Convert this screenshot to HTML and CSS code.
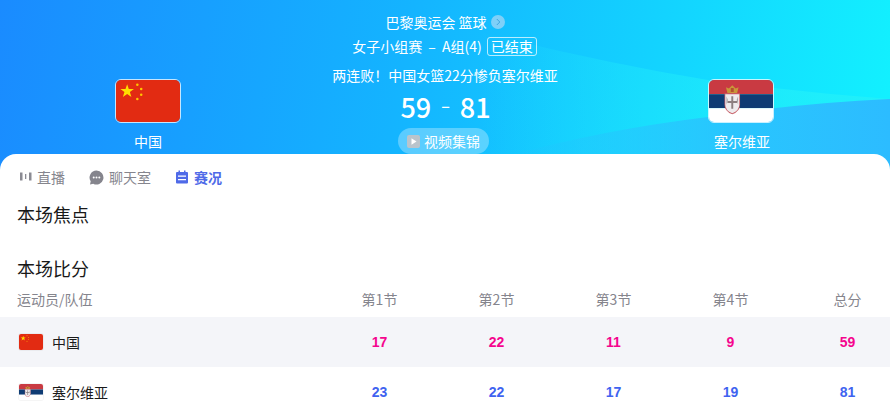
FILE: index.html
```html
<!DOCTYPE html>
<html lang="zh-CN">
<head>
    <meta charset="UTF-8">
    <title>巴黎奥运会 篮球</title>
    <link rel="stylesheet" href="styles.css">
</head>
<body>

<svg width="0" height="0" class="defs">
    <defs>
        <symbol id="flag-cn" viewBox="0 0 66 44" preserveAspectRatio="none">
            <rect width="66" height="44" fill="#e22b12"/>
            <polygon fill="#ffde00" points="11.500,4.500 13.200,9.500 18.500,9.500 14.300,12.700 15.900,17.800 11.500,14.700 7.100,17.800 8.700,12.700 4.500,9.500 9.800,9.500"/>
            <circle cx="22" cy="5" r="1.300" fill="#ffc600"/>
            <circle cx="26" cy="9.500" r="1.300" fill="#ffc600"/>
            <circle cx="26" cy="15.500" r="1.300" fill="#ffc600"/>
            <circle cx="22" cy="20" r="1.300" fill="#ffc600"/>
        </symbol>
        <symbol id="flag-rs" viewBox="0 0 66 44" preserveAspectRatio="none">
            <rect width="66" height="15" fill="#c93a42"/>
            <rect y="15" width="66" height="14.500" fill="#0f3c74"/>
            <rect y="29.500" width="66" height="14.500" fill="#fff"/>
            <!-- crown -->
            <path d="M19 13.500l-1.500-6 3 1.500 3.500-3.500 3.500 3.500 3-1.500-1.500 6z" fill="#c9963a"/>
            <path d="M22.500 8.500h3v4h-3z" fill="#b5502f"/>
            <!-- eagle and shield -->
            <path d="M16 14h16v12q0 7-8 10q-8-3-8-10z" fill="#c8626a"/>
            <path d="M16.800 14.800h14.400v11q0 6-7.200 9q-7.200-3-7.200-9z" fill="#eeecee"/>
            <path d="M23 17h2v5h4v2h-4v6h-2v-6h-4v-2h4z" fill="#8c7f80"/>
            <path d="M18 17l1.500 4-1.500 5zM30 17l-1.500 4 1.500 5z" fill="#a9a2a6"/>
        </symbol>
    </defs>
</svg>

<div class="page">
    <header class="match-head">
        <svg class="waves" viewBox="0 0 890 170" preserveAspectRatio="none">
            <defs>
                <linearGradient id="band" x1="0" x2="1" y1="0" y2="0">
                    <stop offset="0" stop-color="#22eefa" stop-opacity="0"/>
                    <stop offset=".35" stop-color="#22eefa" stop-opacity=".35"/>
                    <stop offset="1" stop-color="#22f0fa" stop-opacity=".9"/>
                </linearGradient>
                <linearGradient id="blue" x1="0" x2="1" y1="0" y2="0">
                    <stop offset="0" stop-color="#2cbcff" stop-opacity="0"/>
                    <stop offset=".6" stop-color="#2cbcff" stop-opacity=".8"/>
                    <stop offset="1" stop-color="#2cbcff"/>
                </linearGradient>
            </defs>
            <path d="M480 32 Q600 62 708 80 Q800 92 890 99 L890 170 L480 170Z" fill="url(#band)"/>
            <path d="M500 158 Q600 130 708 117 Q800 103 890 99 L890 170 L500 170Z" fill="url(#blue)"/>
        </svg>

        <div class="team">
            <svg class="team-flag"><use href="#flag-cn"/></svg>
            <span class="team-name">中国</span>
        </div>

        <div class="match-info">
            <div class="info-line title">巴黎奥运会 篮球
                <span class="more">
                    <svg width="14" height="14" viewBox="0 0 14 14"><circle cx="7" cy="7" r="7" fill="#7fd0f8"/><path d="M5.800 4l3 3-3 3" fill="none" stroke="#3fa5e0" stroke-width="1"/></svg>
                </span>
            </div>
            <div class="info-line round">女子小组赛 – A组(4) <span class="status">已结束</span></div>
            <div class="info-line headline">两连败！中国女篮22分惨负塞尔维亚</div>
            <div class="score"><span>59</span><span class="dash">–</span><span>81</span></div>
            <div class="video-btn">
                <svg width="13" height="13" viewBox="0 0 13 13"><rect width="13" height="13" rx="2" fill="#b9c4cc"/><path d="M4.500 3.200l5 3.300-5 3.300z" fill="#fff"/></svg>
                视频集锦
            </div>
        </div>

        <div class="team">
            <svg class="team-flag"><use href="#flag-rs"/></svg>
            <span class="team-name">塞尔维亚</span>
        </div>
    </header>

    <main class="panel">
        <nav class="tabs">
            <div class="tab">
                <svg width="14" height="14" viewBox="0 0 14 14"><path d="M2 2.500h2.500v8H2zM7 4h1.300v5H7zM11 2.500h2.500v8H11z" fill="#8b8b93"/></svg>
                直播
            </div>
            <div class="tab">
                <svg width="15" height="15" viewBox="0 0 15 15"><path d="M7.500 .5a7 7 0 1 1-3.300 13.200L1 14.500l.7-3.200A7 7 0 0 1 7.500 .5z" fill="#85858d"/><circle cx="4.700" cy="7.500" r="1" fill="#fff"/><circle cx="7.500" cy="7.500" r="1" fill="#fff"/><circle cx="10.300" cy="7.500" r="1" fill="#fff"/></svg>
                聊天室
            </div>
            <div class="tab active">
                <svg width="14" height="14" viewBox="0 0 14 14"><path d="M3.500 .5H5V2h4V.5h1.500V2h1.500a1 1 0 0 1 1 1v9.500a1 1 0 0 1-1 1H2a1 1 0 0 1-1-1V3a1 1 0 0 1 1-1h1.500z" fill="#4f6ae8"/><path d="M3 5.500h8v1.300H3zM3 9h8v1.300H3z" fill="#fff"/></svg>
                赛况
            </div>
        </nav>

        <h2 class="section-title">本场焦点</h2>
        <h2 class="section-title score-title">本场比分</h2>

        <div class="score-table">
            <div class="row head">
                <div class="name">运动员/队伍</div>
                <div>第1节</div><div>第2节</div><div>第3节</div><div>第4节</div><div>总分</div>
            </div>
            <div class="row china">
                <div class="name"><svg class="mini-flag"><use href="#flag-cn"/></svg>中国</div>
                <div>17</div><div>22</div><div>11</div><div>9</div><div>59</div>
            </div>
            <div class="row serbia">
                <div class="name"><svg class="mini-flag"><use href="#flag-rs"/></svg>塞尔维亚</div>
                <div>23</div><div>22</div><div>17</div><div>19</div><div>81</div>
            </div>
        </div>
    </main>
</div>

</body>
</html>
```

FILE: styles.css
```css
html, body {
    margin: 0;
    padding: 0;
    height: 410px;
    overflow: hidden;
}
body {
    font-family: "Noto Sans CJK SC", "Noto Sans", sans-serif;
    background-color: #fff;
    color: #1a1a1a;
}
.defs {
    display: none;
}
.page {
    width: 890px;
}
.match-head {
    position: relative;
    height: 170px;
    display: flex;
    justify-content: space-between;
    background: linear-gradient(100deg, #1a8bff 0%, #14b4ff 45%, #12f2ff 100%);
    color: #fff;
    overflow: hidden;
}
.waves {
    position: absolute;
    left: 0;
    top: 0;
    width: 100%;
    height: 100%;
}
.team {
    position: relative;
    width: 66px;
    margin: 79px 108px 0 115px;
    display: flex;
    flex-direction: column;
    align-items: center;
}
.team:last-child {
    margin: 79px 116px 0 108px;
}
.team:last-child .team-name {
    padding-left: 2px;
}
.team-flag {
    width: 66px;
    height: 44px;
    border: 1px solid rgba(255, 255, 255, 0.75);
    border-radius: 6px;
    box-sizing: border-box;
}
.team-name {
    margin-top: 8px;
    font-size: 14px;
    line-height: 20px;
    white-space: nowrap;
}
.match-info {
    position: relative;
    flex: 1;
    display: flex;
    flex-direction: column;
    align-items: center;
    padding-top: 12px;
}
.info-line {
    display: flex;
    align-items: center;
    gap: 4px;
    font-size: 14px;
    line-height: 20px;
    height: 20px;
    margin-bottom: 3px;
    white-space: nowrap;
}
.title {
    padding-left: 1px;
}
.round {
    margin-top: 1px;
    gap: 5px;
    word-spacing: 3px;
}
.more {
    display: flex;
}
.status {
    border: 1px solid rgba(255, 255, 255, 0.7);
    border-radius: 3px;
    padding: 0 3px;
    line-height: 17px;
}
.headline {
    margin-top: 6px;
    padding-left: 1px;
}
.score {
    display: flex;
    align-items: center;
    gap: 10px;
    font-size: 27px;
    font-weight: 500;
    line-height: 36px;
    margin-top: 1px;
    padding-left: 2px;
}
.dash {
    font-size: 16px;
    margin-top: -4px;
}
.video-btn {
    display: flex;
    align-items: center;
    gap: 4px;
    height: 26px;
    margin: 3px 2px 0 0;
    padding: 0 9px;
    border-radius: 13px;
    background-color: rgba(255, 255, 255, 0.3);
    font-size: 14px;
    box-sizing: border-box;
}
.panel {
    position: relative;
    margin-top: -16px;
    padding-top: 13px;
    background-color: #fff;
    border-radius: 16px 16px 0 0;
}
.tabs {
    display: flex;
    gap: 24px;
    padding-left: 18px;
    height: 20px;
}
.tab {
    display: flex;
    align-items: center;
    gap: 5px;
    font-size: 14px;
    color: #85858d;
}
.tab.active {
    color: #4f6ae8;
    font-weight: 700;
}
.section-title {
    margin: 14px 0 0 17px;
    font-size: 18px;
    font-weight: 400;
    line-height: 26px;
    color: #191919;
}
.score-title {
    margin-top: 28px;
}
.score-table {
    margin-top: 6px;
    width: 906px;
}
.row {
    display: grid;
    grid-template-columns: 321px repeat(5, 117px);
    align-items: center;
    text-align: center;
    height: 50px;
    font-family: "Liberation Sans", "Noto Sans CJK SC", sans-serif;
    font-size: 14px;
    font-weight: 700;
}
.row.head {
    height: 30px;
    padding-bottom: 6px;
    box-sizing: border-box;
    font-family: "Noto Sans CJK SC", sans-serif;
    font-weight: 400;
    color: #85858d;
}
.row.china {
    background-color: #f4f5f9;
    color: #f5058e;
}
.row.serbia {
    color: #3f63f0;
}
.name {
    display: flex;
    align-items: center;
    padding-left: 17px;
    font-family: "Noto Sans CJK SC", sans-serif;
    font-weight: 400;
    color: #1a1a1a;
}
.head .name {
    color: #85858d;
}
.mini-flag {
    width: 24px;
    height: 16px;
    margin: 0 9px 0 2px;
    border-radius: 2px;
    box-shadow: 0 0 0 1px rgba(0, 0, 0, 0.04);
}
```
